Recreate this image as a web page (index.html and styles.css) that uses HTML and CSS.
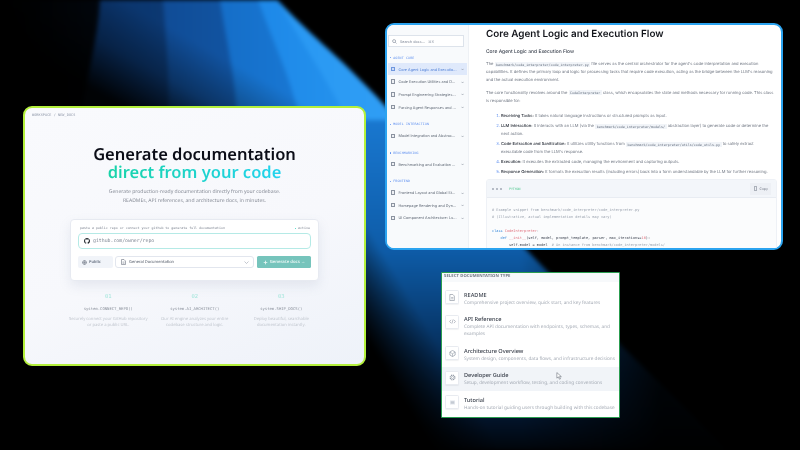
FILE: index.html
```html
<!DOCTYPE html>
<html lang="en">
<head>
  <meta charset="UTF-8" />
  <title>Documentation generator</title>
  <link rel="stylesheet" href="styles.css">
</head>
<body>
  <div class="stage">
    <svg class="backdrop" viewBox="0 0 800 450" width="800" height="450">
      <defs>
        <linearGradient id="band1" x1="0" x2="1" y1="0" y2="0"><stop offset="0" stop-color="#000"/><stop offset="1" stop-color="#061c38"/></linearGradient>
        <linearGradient id="band2" x1="0" x2="1" y1="0" y2="0"><stop offset="0" stop-color="#0a3268"/><stop offset="1" stop-color="#114a8e"/></linearGradient>
        <linearGradient id="band3" x1="0" x2="1" y1="0" y2="0"><stop offset="0" stop-color="#104c96"/><stop offset="1" stop-color="#1566bc"/></linearGradient>
        <linearGradient id="band4" x1="0" x2="1" y1="0" y2="0"><stop offset="0" stop-color="#156ec8"/><stop offset="1" stop-color="#1d82e0"/></linearGradient>
        <linearGradient id="band5" x1="0" x2="1" y1="0" y2="0"><stop offset="0" stop-color="#1d88e8"/><stop offset="1" stop-color="#2897f0"/></linearGradient>
        <linearGradient id="band6" x1="0" x2="1" y1="0" y2="0"><stop offset="0" stop-color="#2897f2"/><stop offset="1" stop-color="#2f9ef5"/></linearGradient>
        <linearGradient id="shade" gradientUnits="userSpaceOnUse" x1="130" y1="110" x2="175" y2="30"><stop offset="0" stop-color="#000" stop-opacity=".95"/><stop offset="0.5" stop-color="#000" stop-opacity=".35"/><stop offset="1" stop-color="#000" stop-opacity="0"/></linearGradient>
        <linearGradient id="lower" x1="0" x2="0" y1="0" y2="1"><stop offset="0" stop-color="#1b7cd6"/><stop offset="0.43" stop-color="#0e5ca8"/><stop offset="0.71" stop-color="#06305e"/><stop offset="0.91" stop-color="#02142a"/><stop offset="1" stop-color="#01050b"/></linearGradient>
        <linearGradient id="lowerSide" gradientUnits="userSpaceOnUse" x1="362" y1="330" x2="412" y2="300"><stop offset="0" stop-color="#000"/><stop offset="1" stop-color="#000" stop-opacity="0"/></linearGradient>
        <linearGradient id="lowerRight" gradientUnits="userSpaceOnUse" x1="520" y1="0" x2="660" y2="0"><stop offset="0" stop-color="#000" stop-opacity="0"/><stop offset="1" stop-color="#000" stop-opacity=".9"/></linearGradient>
      </defs>
      <path d="M383 105 C395 118 410 132 420 140 L548 272 L725 450 L360 450 L360 100 Z" fill="url(#lower)"/>
      <path d="M383 105 C395 118 410 132 420 140 L548 272 L725 450 L360 450 L360 100 Z" fill="url(#lowerSide)"/>
      <path d="M383 105 C395 118 410 132 420 140 L548 272 L725 450 L360 450 L360 100 Z" fill="url(#lowerRight)"/>
      <path d="M5 0 H277 C300 25 330 50 352 72 C370 90 380 100 390 112 V120 H80 Z" fill="url(#band1)"/>
      <path d="M100 0 H277 C300 25 330 50 352 72 C370 90 380 100 390 112 V120 H80 C86 80 98 40 100 0 Z" fill="url(#band2)"/>
      <path d="M163 0 H277 C300 25 330 50 352 72 C370 90 380 100 390 112 V120 H168 C170 80 166 40 163 0 Z" fill="url(#band3)"/>
      <path d="M220 0 H277 C300 25 330 50 352 72 C370 90 380 100 390 112 V120 H237 C236 80 226 40 220 0 Z" fill="url(#band4)"/>
      <path d="M258 0 H277 C300 25 330 50 352 72 C370 90 380 100 390 112 V120 H300 C290 75 272 40 258 0 Z" fill="url(#band5)"/>
      <path d="M277 0 C300 25 330 50 352 72 C370 90 380 100 390 112 V120 H347 C325 75 300 40 277 0 Z" fill="url(#band6)"/>
      <rect x="0" y="0" width="420" height="125" fill="url(#shade)"/>
    </svg>

    <section class="win win-home">
      <div class="crumb">WORKSPACE / NEW_DOCS</div>
      <h1 class="hero">Generate documentation<span class="hero-accent">direct from your code</span></h1>
      <p class="lead">Generate production-ready documentation directly from your codebase.<br>READMEs, API references, and architecture docs, in minutes.</p>
      <div class="repo-card">
        <div class="repo-top"><span>paste a public repo or connect your github to generate full documentation</span><span><i class="live"></i> active</span></div>
        <div class="repo-input">
          <svg width="6" height="6" viewBox="0 0 16 16"><path fill="#24292f" d="M8 0C3.6 0 0 3.6 0 8c0 3.5 2.3 6.5 5.5 7.6.4.1.5-.2.5-.4v-1.4c-2.2.5-2.7-1-2.7-1-.4-.9-.9-1.2-.9-1.2-.7-.5.1-.5.1-.5.8.1 1.2.8 1.2.8.7 1.2 1.9.9 2.3.7.1-.5.3-.9.5-1.1-1.8-.2-3.6-.9-3.6-4 0-.9.3-1.6.8-2.1-.1-.2-.4-1 .1-2.1 0 0 .7-.2 2.2.8.6-.2 1.3-.3 2-.3s1.4.1 2 .3c1.5-1 2.2-.8 2.2-.8.4 1.1.2 1.9.1 2.1.5.6.8 1.3.8 2.1 0 3.1-1.9 3.7-3.7 3.9.3.3.6.8.6 1.500v2.200c0 .2.1.5.6.4C13.7 14.5 16 11.5 16 8c0-4.400-3.600-8-8-8z"/></svg>
          <span>github.com/owner/repo</span>
        </div>
        <div class="repo-actions">
          <div class="chip"><svg width="5" height="5" viewBox="0 0 10 10"><circle cx="5" cy="5" r="3.800" fill="none" stroke="#6b7280" stroke-width="1.400"/><path d="M1 5h8M5 1v8" stroke="#6b7280"/></svg>Public</div>
          <div class="select">
            <svg width="5" height="6" viewBox="0 0 10 12"><path d="M1 1h5l3 3v7H1z" fill="none" stroke="#6b7280" stroke-width="1.200"/><path d="M3 6h4M3 8.500h4" stroke="#6b7280"/></svg>
            <span>General Documentation</span>
            <svg class="caret" width="5" height="3" viewBox="0 0 10 6"><path d="M1 1l4 4 4-4" fill="none" stroke="#9aa3af" stroke-width="1.200"/></svg>
          </div>
          <div class="go">
            <svg width="5" height="5" viewBox="0 0 10 10"><path d="M5 0l1.200 3.800L10 5 6.200 6.200 5 10 3.800 6.200 0 5l3.800-1.200z" fill="#e4f5f2"/></svg>Generate docs →
          </div>
        </div>
      </div>
      <div class="steps">
        <div class="step"><b>01</b><code>system.CONNECT_REPO()</code><p>Securely connect your GitHub repository<br>or paste a public URL.</p></div>
        <div class="step"><b>02</b><code>system.AI_ARCHITECT()</code><p>Our AI engine analyzes your entire<br>codebase structure and logic.</p></div>
        <div class="step"><b>03</b><code>system.SHIP_DOCS()</code><p>Deploy beautiful, searchable<br>documentation instantly.</p></div>
      </div>
    </section>

    <section class="win win-docs">
      <aside class="side">
        <div class="search">
          <svg width="5" height="5" viewBox="0 0 10 10"><circle cx="4.200" cy="4.200" r="3" fill="none" stroke="#7b8494" stroke-width="1.200"/><path d="M6.500 6.500L9 9" stroke="#7b8494" stroke-width="1.200"/></svg>
          <span>Search docs...</span><span class="kbd">⌘K</span>
        </div>
        <div class="nav-label">AGENT CORE</div>
        <div class="nav-item on"><i class="doc"></i><span>Core Agent Logic and Executio...</span><em>⌄</em></div>
        <div class="nav-item"><i class="doc"></i><span>Code Execution Utilities and D...</span><em>⌄</em></div>
        <div class="nav-item"><i class="doc"></i><span>Prompt Engineering Strategies...</span><em>⌄</em></div>
        <div class="nav-item"><i class="doc"></i><span>Parsing Agent Responses and ...</span><em>⌄</em></div>
        <div class="nav-label gap-big">MODEL INTERACTION</div>
        <div class="nav-item"><i class="doc"></i><span>Model Integration and Abstrac...</span><em>⌄</em></div>
        <div class="nav-label">BENCHMARKING</div>
        <div class="nav-item"><i class="doc"></i><span>Benchmarking and Evaluation ...</span><em>⌄</em></div>
        <div class="nav-label">FRONTEND</div>
        <div class="nav-item"><i class="doc"></i><span>Frontend Layout and Global St...</span><em>⌄</em></div>
        <div class="nav-item"><i class="doc"></i><span>Homepage Rendering and Dyn...</span><em>⌄</em></div>
        <div class="nav-item"><i class="doc"></i><span>UI Component Architecture: Lu...</span><em>⌄</em></div>
      </aside>
      <main class="doc-body">
        <h2 class="doc-title">Core Agent Logic and Execution Flow</h2>
        <h3 class="doc-sub">Core Agent Logic and Execution Flow</h3>
        <p class="para">The <code>benchmark/code_interpreter/code_interpreter.py</code> file serves as the central orchestrator for the agent's code interpretation and execution<br>capabilities. It defines the primary loop and logic for processing tasks that require code execution, acting as the bridge between the LLM's reasoning<br>and the actual execution environment.</p>
        <p class="para">The core functionality revolves around the <code>CodeInterpreter</code> class, which encapsulates the state and methods necessary for running code. This class<br>is responsible for:</p>
        <ol class="steps-list">
          <li><b>Receiving Tasks:</b> It takes natural language instructions or structured prompts as input.</li>
          <li><b>LLM Interaction:</b> It interacts with an LLM (via the <code>benchmark/code_interpreter/models/</code> abstraction layer) to generate code or determine the<br>next action.</li>
          <li><b>Code Extraction and Sanitization:</b> It utilizes utility functions from <code>benchmark/code_interpreter/utils/code_utils.py</code> to safely extract<br>executable code from the LLM's response.</li>
          <li><b>Execution:</b> It executes the extracted code, managing the environment and capturing outputs.</li>
          <li><b>Response Generation:</b> It formats the execution results (including errors) back into a form understandable by the LLM for further reasoning.</li>
        </ol>
        <div class="code-box">
          <div class="code-head">
            <span class="dots"><i></i><i></i><i></i></span><span class="lang">PYTHON</span>
            <span class="copy"><svg width="5" height="5" viewBox="0 0 10 10"><rect x="2.500" y="1.500" width="5" height="7.500" fill="none" stroke="#6b7280"/></svg>Copy</span>
          </div>
<pre class="code"><span class="c"># Example snippet from benchmark/code_interpreter/code_interpreter.py</span>
<span class="c"># (Illustrative, actual implementation details may vary)</span>

<span class="k">class</span> <span class="n">CodeInterpreter</span><span class="c">:</span>
    <span class="k">def</span> <span class="n">__init__</span>(self, model, prompt_template, parser, max_iterations=<span class="n">10</span>):
        self.model = model  <span class="c"># An instance from benchmark/code_interpreter/models/</span>
        self.prompt_template = prompt_template</pre>
        </div>
      </main>
    </section>

    <section class="win win-types">
      <div class="types-head">SELECT DOCUMENTATION TYPE</div>
      <div class="type">
        <div class="type-icon"><svg width="6" height="7" viewBox="0 0 14 16"><path d="M2 1h7l3.500 3.500V15H2z" fill="none" stroke="#8b93a0" stroke-width="1.500"/><path d="M5 8h5M5 11h5" stroke="#8b93a0" stroke-width="1.300"/></svg></div>
        <div><div class="type-name">README</div><div class="type-desc">Comprehensive project overview, quick start, and key features</div></div>
      </div>
      <div class="type">
        <div class="type-icon"><svg width="7" height="5" viewBox="0 0 16 12"><path d="M4.500 2L1 6l3.500 4M11.500 2L15 6l-3.500 4M9.500 1L6.500 11" fill="none" stroke="#8b93a0" stroke-width="1.400"/></svg></div>
        <div><div class="type-name">API Reference</div><div class="type-desc">Complete API documentation with endpoints, types, schemas, and<br>examples</div></div>
      </div>
      <div class="type">
        <div class="type-icon"><svg width="7" height="7" viewBox="0 0 16 16"><path d="M8 1l6 3.500v7L8 15l-6-3.500v-7z" fill="none" stroke="#8b93a0" stroke-width="1.500"/><path d="M2 5l6 3.500L14 5M8 8.500V15" fill="none" stroke="#8b93a0" stroke-width="1.200"/></svg></div>
        <div><div class="type-name">Architecture Overview</div><div class="type-desc">System design, components, data flows, and infrastructure decisions</div></div>
      </div>
      <div class="type hover">
        <div class="type-icon"><svg width="7" height="7" viewBox="0 0 16 16"><circle cx="8" cy="8" r="5.500" fill="none" stroke="#8b93a0" stroke-width="2.400" stroke-dasharray="2.500 1.500"/><circle cx="8" cy="8" r="2.500" fill="none" stroke="#8b93a0" stroke-width="1.300"/></svg></div>
        <div><div class="type-name">Developer Guide</div><div class="type-desc">Setup, development workflow, testing, and coding conventions</div></div>
      </div>
      <div class="type">
        <div class="type-icon"><svg width="7" height="5" viewBox="0 0 16 12"><path d="M2 1h12v10H2z" fill="#e6e9ee"/><path d="M4 4h8M4 6h8M4 8h8" stroke="#a3aab5"/></svg></div>
        <div><div class="type-name">Tutorial</div><div class="type-desc">Hands-on tutorial guiding users through building with this codebase</div></div>
      </div>
      <svg class="pointer" width="6" height="8" viewBox="0 0 14 18"><path d="M2 1v13l3.500-3 2.500 5.500 2.500-1L8 10.500h4.500z" fill="#fff" stroke="#555c66" stroke-width="1.200"/></svg>
    </section>
  </div>
</body>
</html>
```

FILE: styles.css
```css
* {
  box-sizing: border-box;
}
body {
  margin: 0;
  background: #000;
  overflow: hidden;
  font-family: 'Inter', sans-serif;
  text-rendering: geometricPrecision;
}
.stage {
  position: relative;
  width: 800px;
  height: 450px;
  overflow: hidden;
}
.backdrop {
  position: absolute;
  top: 0;
  left: 0;
  filter: blur(2px);
}
.win {
  position: absolute;
  overflow: hidden;
  filter: blur(0.35px);
}

/* home window */
.win-home {
  left: 23px;
  top: 106px;
  width: 343px;
  height: 260px;
  border: 2px solid #b4f03c;
  border-radius: 9px;
  background: linear-gradient(160deg, #f9fafd 0%, #f7f8fc 55%, #eef2f9 100%);
  font-family: 'Noto Sans', sans-serif;
  text-align: center;
}
.crumb {
  padding: 5px 0 0 7px;
  font: 3.450px/5px 'DejaVu Sans Mono', monospace;
  color: #8b94a6;
  text-align: left;
  letter-spacing: 0.1px;
}
.hero {
  margin: 27px 0 0;
  font-size: 16.500px;
  line-height: 18px;
  font-weight: 600;
  color: #0b0d17;
}
.hero-accent {
  display: block;
  width: max-content;
  margin: 0 auto;
  padding-bottom: 4px;
  background: linear-gradient(90deg, #18d3a8, #22d3ee);
  -webkit-background-clip: text;
  background-clip: text;
  color: transparent;
}
.lead {
  margin: 3px 0 0;
  font-size: 5.070px;
  line-height: 9px;
  color: #878c97;
}
.repo-card {
  width: 249px;
  height: 62px;
  margin: 13px 0 0 45px;
  padding: 6px 7px;
  background: #fff;
  border: 0.5px solid #e7eaf1;
  border-radius: 4px;
  box-shadow: 0 5px 12px rgba(120, 135, 165, 0.14);
}
.repo-top {
  display: flex;
  justify-content: space-between;
  padding: 0 1px 0 2px;
  font: 3.300px/5px 'DejaVu Sans Mono', monospace;
  color: #7c8390;
}
.live {
  display: inline-block;
  width: 1.500px;
  height: 1.500px;
  border-radius: 50%;
  background: #2dd4bf;
}
.repo-input {
  display: flex;
  align-items: center;
  gap: 3px;
  height: 16px;
  margin-top: 2px;
  padding-left: 5px;
  border: 0.75px solid #b5eae6;
  border-radius: 4px;
  font: 4.850px 'DejaVu Sans Mono', monospace;
  color: #7d8592;
}
.repo-actions {
  display: flex;
  gap: 2px;
  margin-top: 7px;
  height: 12px;
  font-size: 4px;
  color: #4c5563;
}
.chip {
  display: flex;
  align-items: center;
  gap: 2px;
  width: 35px;
  padding-left: 4px;
  background: #f1f4f9;
  border-radius: 2px;
  font-weight: 600;
  color: #667080;
}
.select {
  display: flex;
  align-items: center;
  gap: 3px;
  width: 139px;
  padding: 0 4px 0 5px;
  background: #fff;
  border: 0.5px solid #e2e6ee;
  border-radius: 3px;
}
.caret {
  margin-left: auto;
}
.go {
  display: flex;
  align-items: center;
  justify-content: center;
  gap: 2px;
  width: 54px;
  margin-left: 1px;
  background: #76c4bc;
  border-radius: 1.500px;
  color: #e8f6f4;
  font-size: 4.300px;
  font-weight: 600;
}
.steps {
  display: flex;
  margin: 12px 0 0 40px;
}
.step {
  width: 86.500px;
  flex: none;
}
.step b {
  display: block;
  font: 5.500px/8px 'DejaVu Sans Mono', monospace;
  color: #a5e6dc;
}
.step code {
  display: block;
  margin-top: 4px;
  font: 3.900px/8px 'DejaVu Sans Mono', monospace;
  color: #8b919c;
}
.step p {
  margin: 4px 0 0;
  font-size: 4.150px;
  line-height: 6px;
  color: #c2c7cf;
  white-space: nowrap;
}

/* docs window */
.win-docs {
  display: flex;
  left: 385px;
  top: 23px;
  width: 398px;
  height: 227px;
  border: 2px solid #2ba3ef;
  border-radius: 9px;
  background: #fff;
}
.side {
  width: 82px;
  flex: none;
  padding: 10px 0 0 1px;
  background: #f8fafc;
  border-right: 0.5px solid #eef1f5;
}
.search {
  display: flex;
  align-items: center;
  gap: 3px;
  width: 76px;
  height: 12px;
  padding-left: 3px;
  background: #fff;
  border: 0.5px solid #dde3eb;
  font-size: 3.700px;
  color: #7b8494;
}
.kbd {
  color: #a0a7b3;
}
.nav-label {
  margin: 8.700px 0 2px 2px;
  height: 5px;
  font: 3.200px/5px 'DejaVu Sans Mono', monospace;
  color: #5b8def;
  letter-spacing: 0.2px;
}
.nav-label::before {
  content: '';
  display: inline-block;
  width: 1.200px;
  height: 1.200px;
  margin-right: 2px;
  border-radius: 50%;
  background: #5b8def;
  vertical-align: middle;
}
.nav-label.gap-big {
  margin-top: 9px;
}
.nav-item {
  display: flex;
  align-items: center;
  width: 79px;
  height: 12.700px;
  padding-left: 3px;
  font-size: 3.750px;
  color: #5f6875;
  white-space: nowrap;
}
.nav-item.on {
  background: #dfe9fb;
  color: #4f7fd6;
}
.doc {
  width: 3.500px;
  height: 4.500px;
  margin-right: 4px;
  flex: none;
  border: 0.75px solid #8b93a0;
  background: #eef0f4;
}
.nav-item.on .doc {
  border-color: #6f97de;
  background: #cddcf7;
}
.nav-item em {
  margin-left: auto;
  margin-right: 3px;
  font-style: normal;
  font-size: 4px;
  line-height: 4px;
  color: #7d8592;
}
.doc-body {
  flex: 1;
  min-width: 0;
  padding: 0 4px 0 17px;
}
.doc-title {
  margin: 0;
  padding-top: 1px;
  font-size: 9.900px;
  line-height: 16px;
  font-weight: 600;
  color: #14161c;
}
.doc-sub {
  margin: 6px 0 0;
  font-size: 4.950px;
  line-height: 8px;
  font-weight: 500;
  color: #3d4450;
}
.para {
  margin: 4px 0 0;
  font-size: 4.080px;
  line-height: 7.800px;
  color: #6f7682;
  white-space: nowrap;
}
.para + .para {
  margin-top: 5.500px;
}
.para code,
.steps-list code {
  padding: 0.5px 1.500px;
  background: #f1f4f8;
  font: 3.350px 'DejaVu Sans Mono', monospace;
  color: #5f6a7b;
}
.steps-list {
  margin: 8px 0 0;
  padding: 0 0 0 15px;
  font-size: 4.080px;
  line-height: 8px;
  color: #6f7682;
  white-space: nowrap;
}
.steps-list li {
  margin-bottom: 2px;
}
.steps-list li::marker {
  color: #5b8def;
}
.steps-list b {
  font-weight: 500;
  color: #1f2530;
}
.code-box {
  margin: 3px 0 0;
  background: #fbfcfd;
  border-radius: 3px;
  overflow: hidden;
  height: 80px;
  border: 0.5px solid #eef1f6;
}
.code-head {
  display: flex;
  align-items: center;
  height: 18px;
  padding: 0 5px;
  background: #f3f6fa;
  border-bottom: 0.5px solid #e8ecf2;
}
.dots {
  display: flex;
  gap: 2px;
  margin-right: 7px;
}
.dots i {
  width: 2px;
  height: 2px;
  border-radius: 50%;
  background: #a2a9b5;
}
.lang {
  font: 3.200px 'DejaVu Sans Mono', monospace;
  color: #4fc88f;
}
.copy {
  display: flex;
  align-items: center;
  gap: 1.500px;
  margin-left: auto;
  height: 12px;
  padding: 0 3px;
  background: #edf0f5;
  font-size: 3.400px;
  color: #6b7280;
}
.code {
  margin: 0;
  padding: 9px 5px;
  font: 3.550px/7px 'DejaVu Sans Mono', monospace;
  color: #3c4350;
}
.code .c {
  color: #9ba3af;
}
.code .k {
  color: #3f8ddb;
}
.code .n {
  color: #e0707d;
}

/* picker window */
.win-types {
  left: 441px;
  top: 272px;
  width: 179px;
  height: 146px;
  border: 1px solid #2a9d50;
  border-radius: 1px;
  background: #fff;
}
.types-head {
  height: 9px;
  margin-bottom: 8px;
  padding: 1px 0 0 2px;
  background: #f7f9fb;
  font-size: 4.200px;
  line-height: 5px;
  font-weight: 700;
  color: #707784;
  letter-spacing: 0.1px;
  font-family: 'Noto Sans', sans-serif;
}
.type {
  display: flex;
  gap: 5px;
  padding: 0 3px;
  margin-bottom: 8px;
  font-family: 'Noto Sans', sans-serif;
}
.type.hover {
  margin: -4px 0 4px;
  padding: 4px 3px;
  background: #f1f4f8;
}
.type-icon {
  display: flex;
  align-items: center;
  justify-content: center;
  width: 14px;
  height: 14px;
  flex: none;
  background: #fff;
  border: 0.5px solid #e8ebf0;
  border-radius: 1.500px;
  box-shadow: 0 1px 1px rgba(60, 70, 90, 0.07);
}
.type-name {
  padding-top: 0.5px;
  font-size: 5.600px;
  line-height: 8px;
  font-weight: 500;
  color: #3c424d;
}
.type-desc {
  font-size: 4.700px;
  line-height: 7px;
  margin-top: 1px;
  color: #a5abb5;
  white-space: nowrap;
}
.pointer {
  position: absolute;
  left: 114px;
  top: 99px;
}
```
